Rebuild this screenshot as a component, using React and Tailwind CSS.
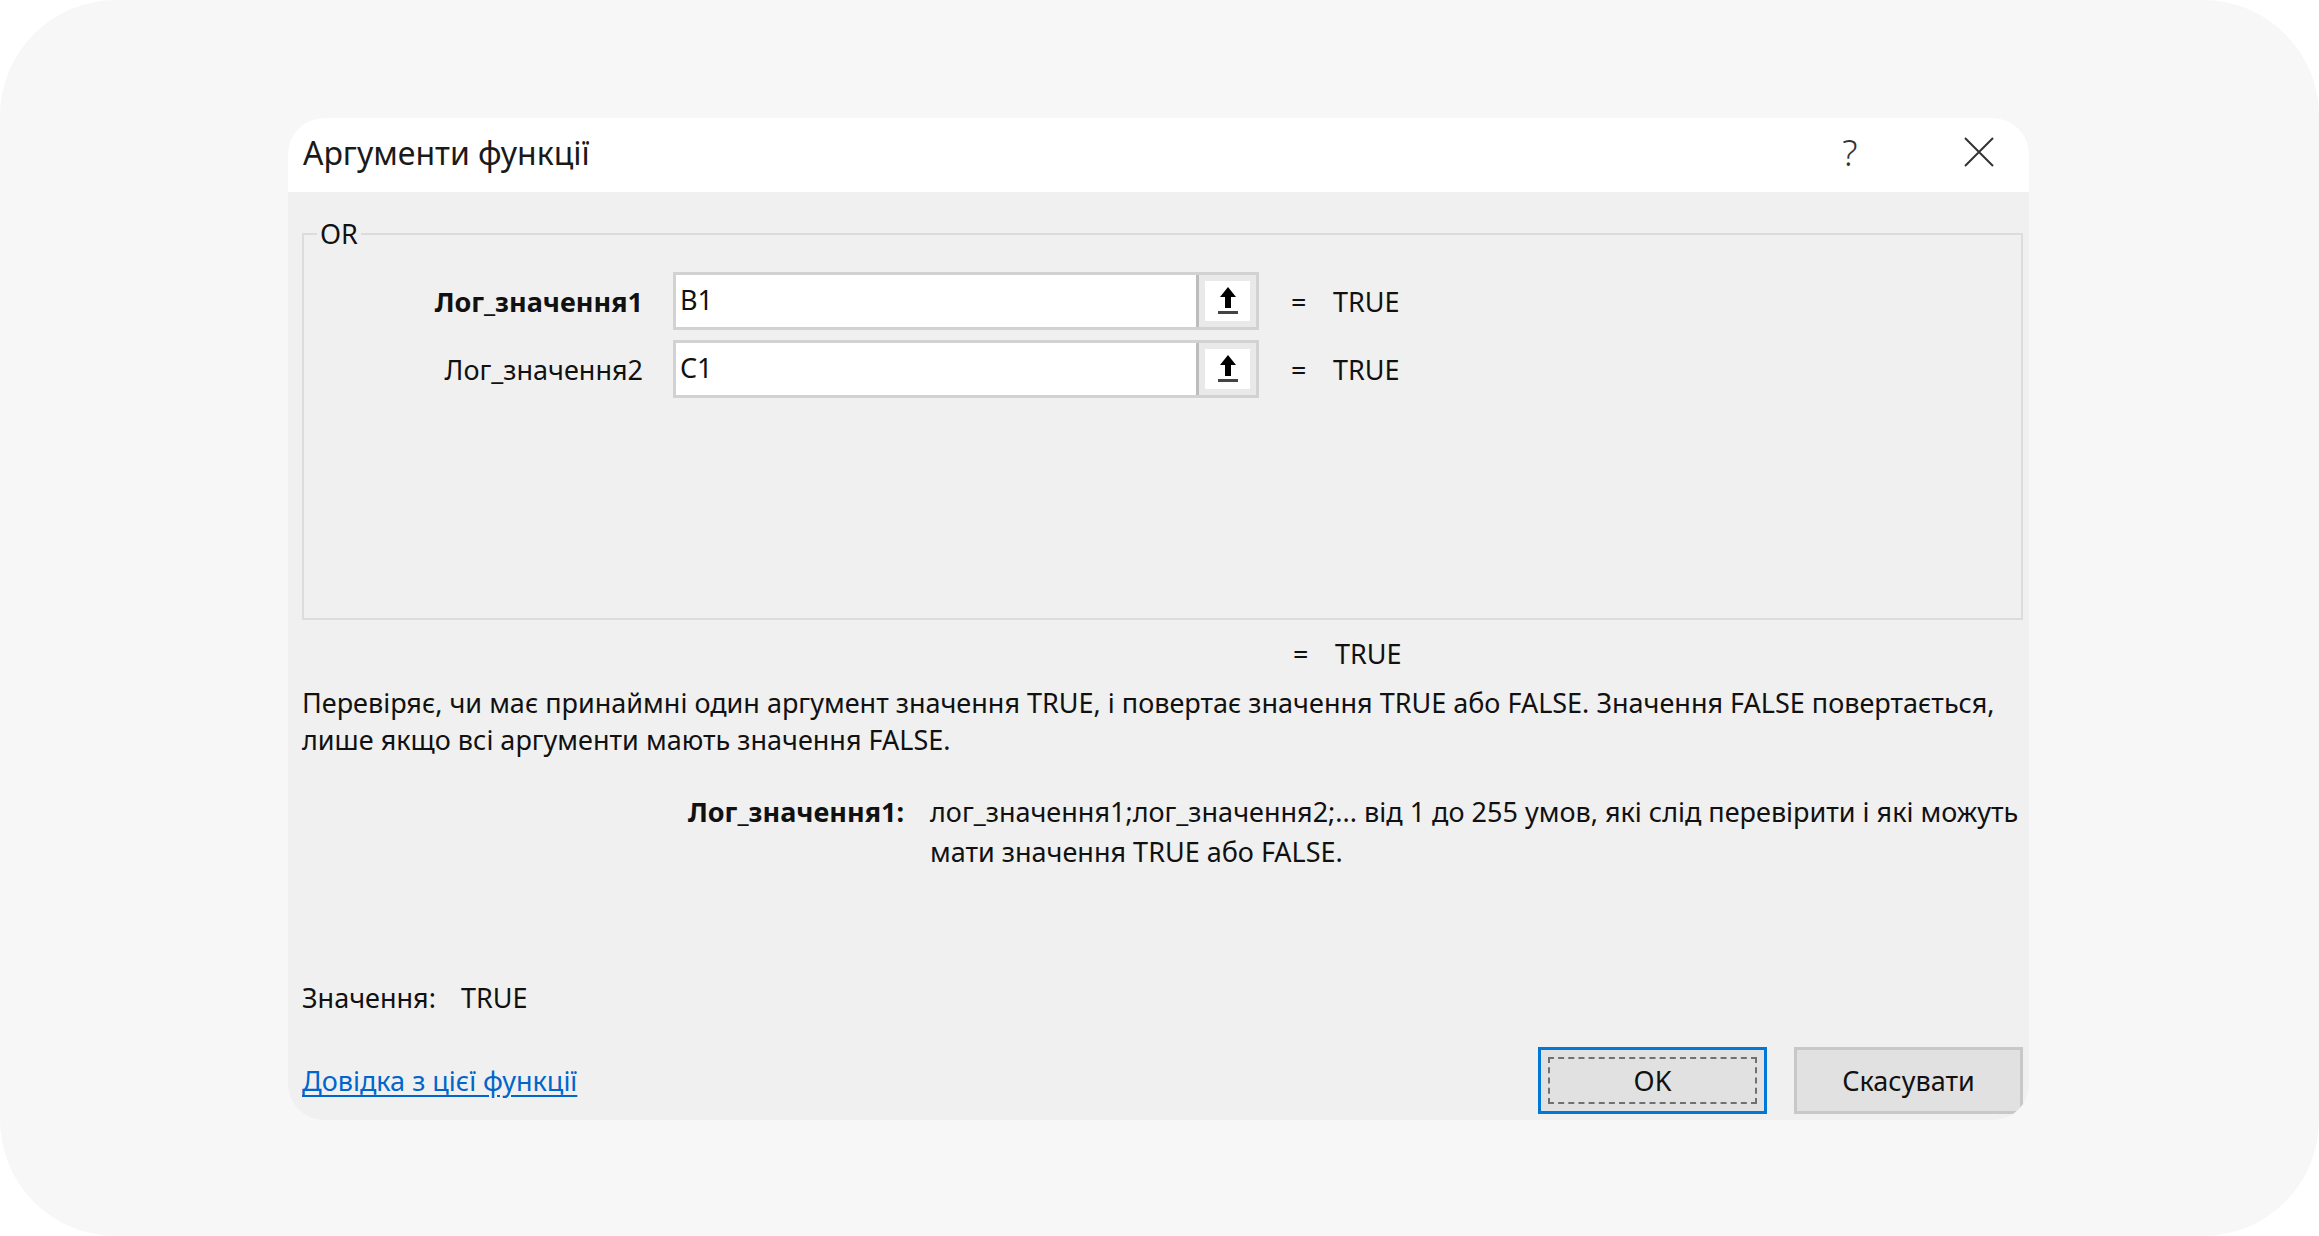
import React from "react";

const font = { fontFamily: '"Noto Sans", "Open Sans", sans-serif' };

function RefButton() {
  return (
    <div className="h-full w-[60px] border-l-[3px] border-[#bdbdbd] bg-[#e9e9e9] p-[6px]">
      <div className="flex h-full w-full items-center justify-center bg-white">
        <svg width="26" height="32" viewBox="0 0 26 32">
          <path d="M13 2 L21 12 L16 12 L16 23 L10 23 L10 12 L5 12 Z" fill="#000" />
          <rect x="3" y="26" width="20" height="3" fill="#444" />
        </svg>
      </div>
    </div>
  );
}

function ArgRow({ label, value, bold }) {
  return (
    <div className="flex items-center">
      <div className={`w-[339px] text-right ${bold ? "font-bold" : ""}`}>{label}</div>
      <div className="ml-[30px] flex h-[58px] w-[586px] border-[3px] border-[#d2d2d2] bg-white">
        <div className="flex-1 pl-[4px] leading-[50px]">{value}</div>
        <RefButton />
      </div>
      <div className="ml-[32px] w-[42px]">=</div>
      <div>TRUE</div>
    </div>
  );
}

export default function App() {
  return (
    <div className="min-h-screen w-full bg-white" style={font}>
      <div className="h-[1236px] w-full rounded-[116px] bg-[#f7f7f7] pl-[288px] pt-[118px]">
        <div className="flex h-[1002px] w-[1741px] flex-col overflow-hidden rounded-[36px] bg-[#f0f0f0] text-[27px] leading-[37px] text-[#111]">
          <div className="flex h-[74px] shrink-0 items-center bg-white pb-[6px] pl-[15px]">
            <div className="flex-1 text-[32px] text-[#1a1a1a]">Аргументи функції</div>
            <div className="w-[30px] text-center text-[36px] font-light text-[#333]">?</div>
            <div className="ml-[98px] mr-[34px]">
              <svg width="32" height="32" viewBox="0 0 32 32">
                <path d="M2 2 L30 30 M30 2 L2 30" stroke="#333" strokeWidth="2" fill="none" />
              </svg>
            </div>
          </div>

          <div className="flex flex-1 flex-col pl-[14px] pr-[6px]">
            <fieldset className="mt-[23px] h-[405px] w-[1721px] border-2 border-[#dcdcdc] pt-[20px]">
              <legend className="ml-[13px] px-[3px]">OR</legend>
              <div className="flex flex-col gap-[10px]">
                <ArgRow label="Лог_значення1" value="B1" bold />
                <ArgRow label="Лог_значення2" value="C1" />
              </div>
            </fieldset>

            <div className="mt-[15px] flex">
              <div className="ml-[991px] w-[42px]">=</div>
              <div>TRUE</div>
            </div>

            <p className="mt-[12px] w-[1720px]">
              Перевіряє, чи має принаймні один аргумент значення TRUE, і повертає значення TRUE або FALSE. Значення FALSE повертається,
              <br />
              лише якщо всі аргументи мають значення FALSE.
            </p>

            <div className="mt-[34px] flex leading-[40px]">
              <div className="w-[602px] text-right font-bold">Лог_значення1:</div>
              <div className="ml-[26px] w-[1092px] whitespace-nowrap">
                лог_значення1;лог_значення2;... від 1 до 255 умов, які слід перевірити і які можуть
                <br />
                мати значення TRUE або FALSE.
              </div>
            </div>

            <div className="mt-[107px] flex">
              <div className="w-[159px]">Значення:</div>
              <div>TRUE</div>
            </div>

            <div className="mt-[31px] flex h-[67px] items-center">
              <a href="#" className="flex-1 text-[#0066cc] underline underline-offset-4">
                Довідка з цієї функції
              </a>
              <button className="h-[67px] w-[229px] border-[3px] border-[#0078d7] bg-[#e1e1e1] p-[7px]">
                <div className="flex h-full w-full items-center justify-center border-2 border-dashed border-[#707070]">
                  OK
                </div>
              </button>
              <button className="ml-[27px] h-[67px] w-[229px] border-[3px] border-[#c8c8c8] bg-[#e1e1e1]">
                Скасувати
              </button>
            </div>
          </div>
        </div>
      </div>
    </div>
  );
}
